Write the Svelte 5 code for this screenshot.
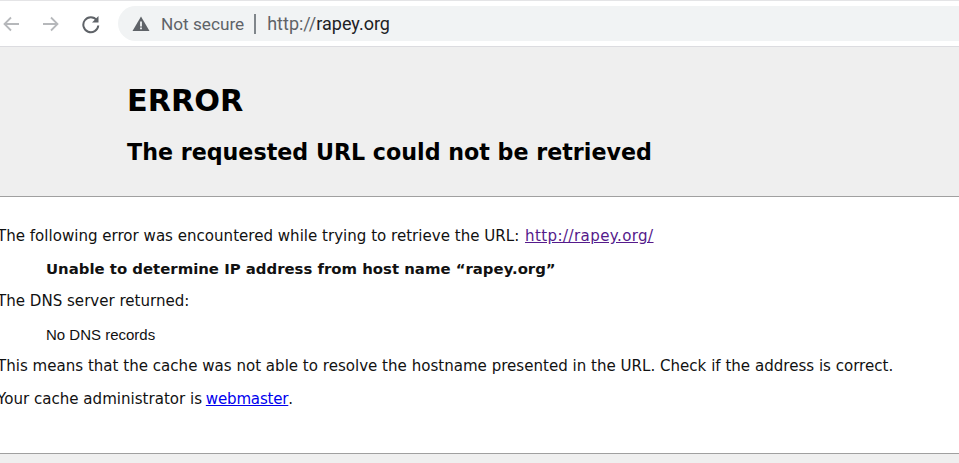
<script lang="ts">
	const host = 'rapey.org';
</script>

<div class="browser-bar">
	<button class="nav-btn" aria-label="Back">
		<svg width="20" height="20" viewBox="0 0 20 20"><path d="M18 10H4M10 3.500 3.500 10l6.500 6.500" fill="none" stroke="#b6b8bb" stroke-width="1.800"/></svg>
	</button>
	<button class="nav-btn" aria-label="Forward">
		<svg width="20" height="20" viewBox="0 0 20 20"><path d="M2 10h14M10 3.500l6.500 6.500-6.500 6.500" fill="none" stroke="#b6b8bb" stroke-width="1.800"/></svg>
	</button>
	<button class="nav-btn" aria-label="Reload">
		<svg width="20" height="20" viewBox="0 0 20 20"><path d="M15.800 6.200A7.500 7.500 0 1 0 17.300 11.500" fill="none" stroke="#5f6368" stroke-width="2"/><path d="M17.500 2V8.500H11z" fill="#5f6368"/></svg>
	</button>
	<div class="omnibox">
		<svg class="warn" width="18" height="16" viewBox="0 0 18 16"><path d="M9 .5 17.500 15H.5z" fill="#5f6368"/><path d="M8.100 5.500h1.800v5H8.100zM8.100 11.500h1.800v1.800H8.100z" fill="#f1f3f4"/></svg>
		<span class="secure">Not secure</span>
		<span class="divider"></span>
		<span class="url">http://<span class="host">{host}</span></span>
	</div>
</div>

<header class="title">
	<h1>ERROR</h1>
	<h2>The requested URL could not be retrieved</h2>
</header>

<main class="content">
	<p>The following error was encountered while trying to retrieve the URL: <a class="visited" href="http://rapey.org/">http://rapey.org/</a></p>
	<blockquote><strong>Unable to determine IP address from host name “rapey.org”</strong></blockquote>
	<p>The DNS server returned:</p>
	<blockquote class="dns">No DNS records</blockquote>
	<p>This means that the cache was not able to resolve the hostname presented in the URL. Check if the address is correct.</p>
	<p>Your cache administrator is <a class="admin" href="mailto:webmaster">webmaster</a>.</p>
</main>

<div class="footer"></div>

<style>
	:global(body) {
		margin: 0;
		background: #fff;
		overflow: hidden;
	}

	.browser-bar {
		display: flex;
		align-items: center;
		height: 45px;
		padding-left: 1px;
		background: #fff;
		border-top: 1px solid #e4e4e6;
		border-bottom: 1px solid #dcdce0;
	}

	.nav-btn {
		display: flex;
		align-items: center;
		justify-content: center;
		width: 20px;
		height: 20px;
		margin-right: 20px;
		padding: 0;
		border: none;
		background: transparent;
	}

	.omnibox {
		display: flex;
		align-items: center;
		flex: 1;
		height: 35px;
		margin-left: -3px;
		padding-left: 14px;
		background: #f1f3f4;
		border-radius: 18px 0 0 18px;
		font-family: Roboto, sans-serif;
		font-size: 17.200px;
	}

	.secure {
		margin-left: 11px;
		color: #5f6368;
	}

	.divider {
		width: 2px;
		height: 20px;
		margin: 0 11px 0 10px;
		background: #80868b;
	}

	.url {
		font-size: 18px;
		color: #5f6368;
	}

	.host {
		color: #202124;
	}

	.title {
		height: 149px;
		padding-left: 127px;
		background: #efefef;
		border-bottom: 1px solid #a0a0a0;
		font-family: "DejaVu Sans", sans-serif;
		color: #000;
		overflow: hidden;
	}

	.title h1 {
		margin: 36px 0 0;
		font-size: 30.300px;
		line-height: 36px;
	}

	.title h2 {
		margin: 18px 0 0;
		font-size: 22.200px;
		line-height: 30px;
	}

	.content {
		height: 240px;
		margin-left: -3px;
		padding-top: 16px;
		font-family: "DejaVu Sans", sans-serif;
		font-size: 15.070px;
		line-height: 17.600px;
		color: #111;
		overflow: hidden;
	}

	.content p {
		margin: 15px 0;
	}

	.content blockquote {
		margin: 15px 0 15px 49px;
	}

	.content strong {
		font-size: 14.900px;
	}

	.content .dns {
		font-family: "Liberation Sans", sans-serif;
		font-size: 15px;
	}

	.visited {
		margin-left: 1px;
		color: #551a8b;
		letter-spacing: 0.400px;
	}

	.admin {
		margin-left: -1px;
		color: #00e;
		letter-spacing: -0.200px;
	}

	.footer {
		height: 9px;
		background: #efefef;
		border-top: 1px solid #a0a0a0;
	}
</style>
